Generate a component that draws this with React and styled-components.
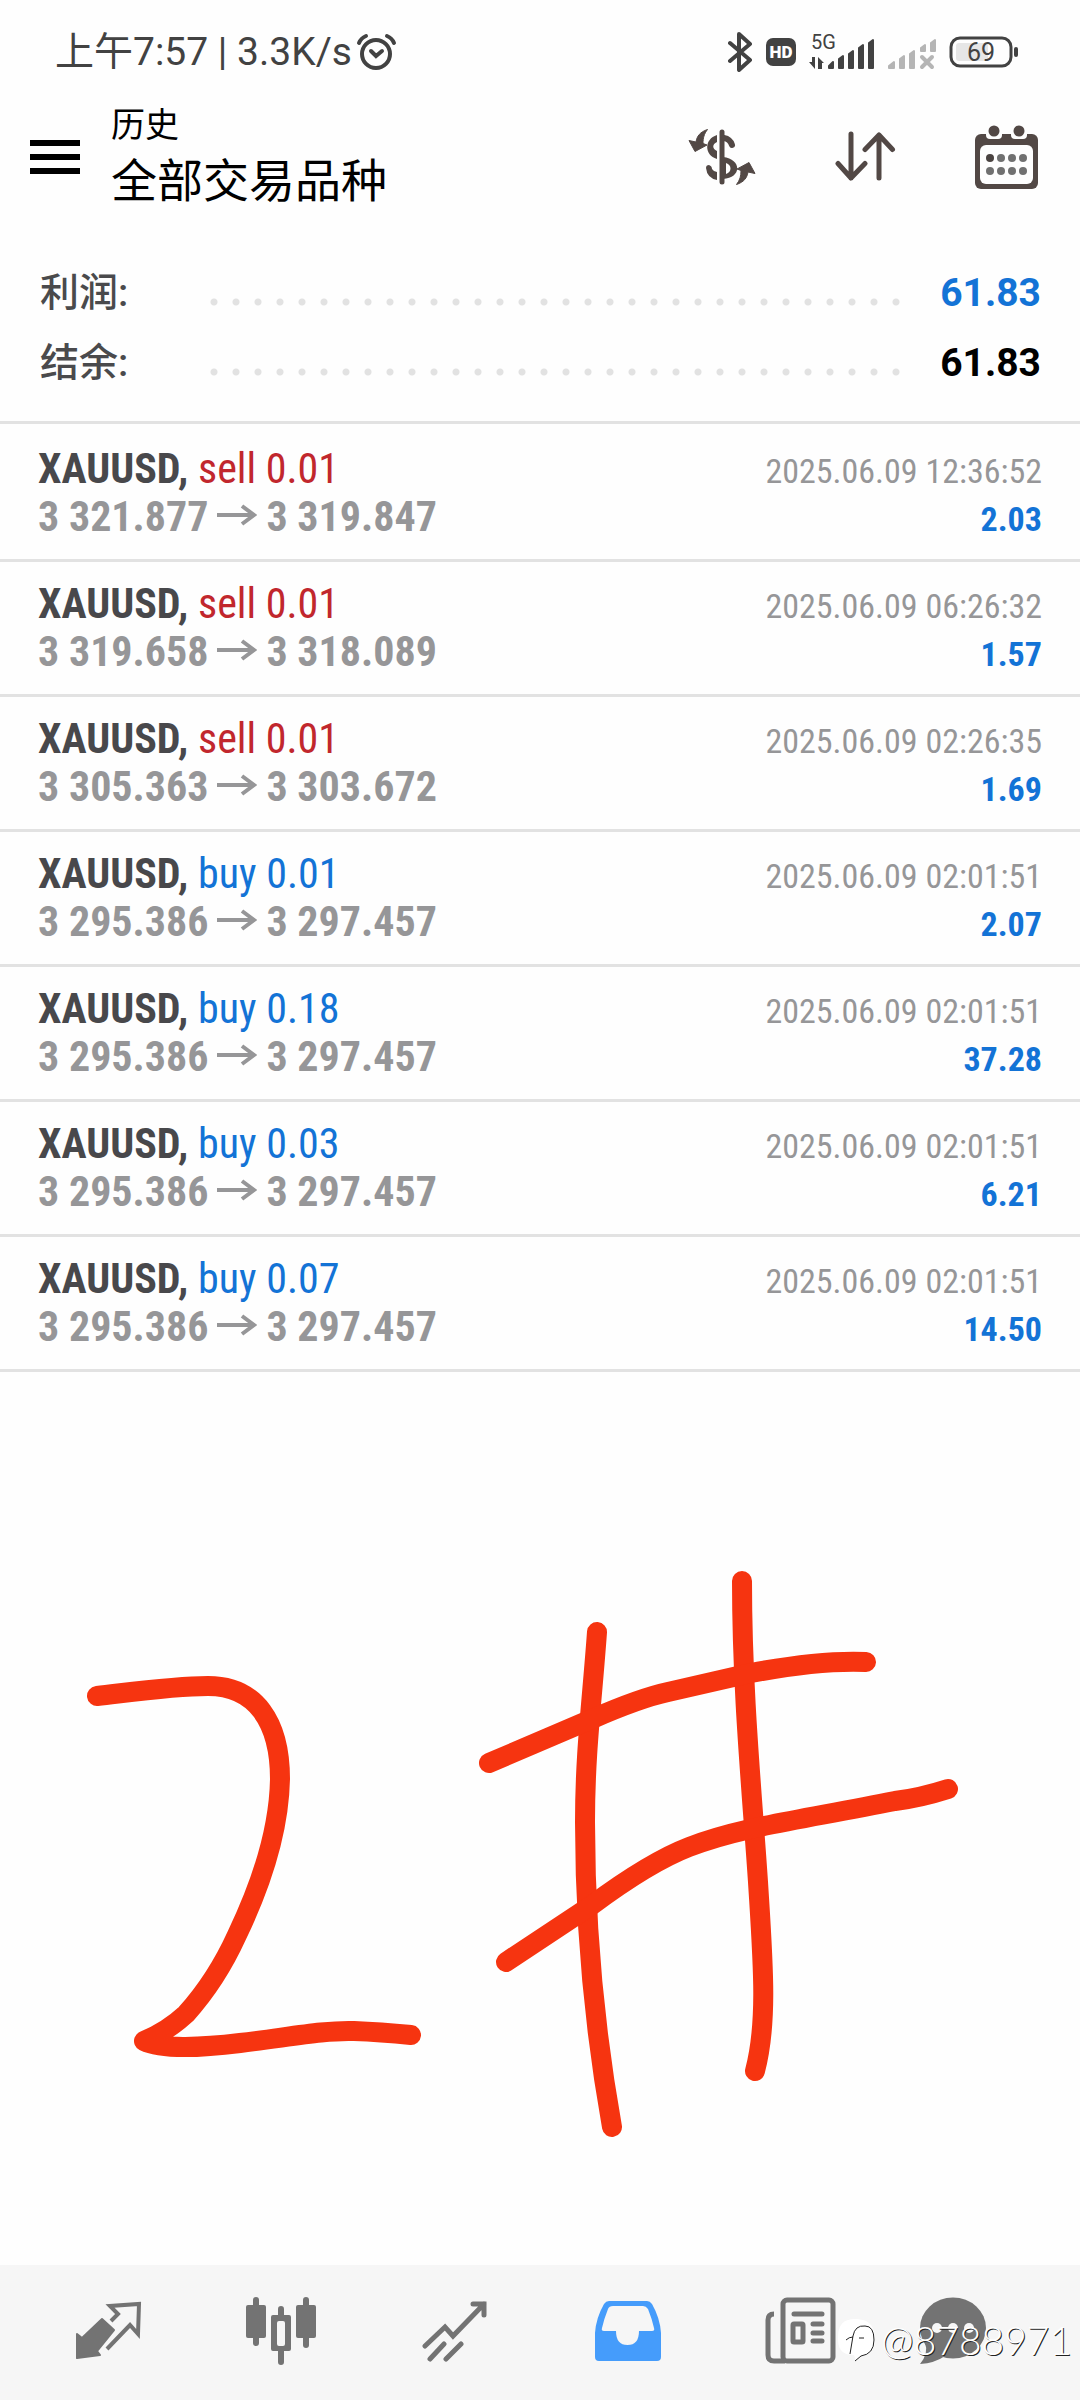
import React, { useState } from "react";
import styled, { createGlobalStyle } from "styled-components";

const GlobalStyle = createGlobalStyle`
  * {
    box-sizing: border-box;
  }
  body {
    margin: 0;
    background: #fefefe;
    font-family: Roboto, "Noto Sans CJK SC", sans-serif;
    color: #000;
  }
  svg {
    display: block;
    flex-shrink: 0;
  }
`;

const Screen = styled.div`
  min-height: 100vh;
  display: flex;
  flex-direction: column;
`;

const StatusBar = styled.div`
  height: 99px;
  padding: 5px 61px 0 55px;
  display: flex;
  justify-content: space-between;
  align-items: center;
  color: #424242;
`;

const StatusGroup = styled.div`
  display: flex;
  align-items: center;
  gap: ${(p) => p.$gap};
  font-size: 39px;
  line-height: 44px;
`;

const Header = styled.header`
  display: flex;
  align-items: center;
  gap: 31px;
  padding: 2px 41px 42px 30px;
`;

const IconButton = styled.button`
  border: none;
  background: none;
  padding: 0;
  color: #524845;
  cursor: pointer;
`;

const Titles = styled.div`
  flex: 1;
`;

const Subtitle = styled.div`
  font-size: 34px;
  line-height: 48px;
`;

const Title = styled.h1`
  margin: 0;
  font-size: 46px;
  font-weight: 400;
  line-height: 64px;
`;

const Actions = styled.div`
  display: flex;
  align-items: center;
  gap: 78px;
`;

const Summary = styled.section`
  padding: 3px 39px 23px 40px;
  border-bottom: 3px solid #e2e2e2;
`;

const SummaryRow = styled.div`
  display: flex;
  align-items: baseline;
  height: 70px;
  font-size: 39px;
  line-height: 70px;
`;

const SummaryLabel = styled.span`
  flex: 0 0 163px;
  font-weight: 500;
  color: #4a4a4c;
`;

const Dots = styled.span`
  flex: 1;
  height: 8px;
  margin-bottom: 7px;
  background: radial-gradient(circle, #e2e2e2 3px, transparent 4px) 0 0 / 22px 8px;
`;

const SummaryValue = styled.span`
  flex: 0 0 134px;
  text-align: right;
  font-weight: 700;
  color: ${(p) => p.$color};
`;

const DealList = styled.ul`
  list-style: none;
  margin: 0;
  padding: 3px 0 0;
  font-family: "Roboto Condensed", Roboto, sans-serif;
`;

const Deal = styled.li`
  padding: 18px 38px;
  border-bottom: 3px solid #e2e2e2;
`;

const Line = styled.div`
  display: flex;
  justify-content: space-between;
  align-items: baseline;
  height: 48px;
  font-size: 42px;
  line-height: 48px;
`;

const Symbol = styled.span`
  font-weight: 700;
  color: #48484b;
`;

const Side = styled.span`
  color: ${(p) => (p.$side === "sell" ? "#c1272d" : "#1373d6")};
`;

const Prices = styled.span`
  font-weight: 700;
  color: #969698;
  svg {
    display: inline-block;
    margin: 0 9px;
    vertical-align: 5px;
  }
`;

const Time = styled.time`
  font-size: 34px;
  color: #969698;
`;

const Profit = styled.span`
  font-size: 34px;
  font-weight: 700;
  color: #1373d6;
`;

const Sketch = styled.div`
  flex: 1;
  svg {
    width: 100%;
    height: auto;
  }
`;

const TabBar = styled.nav`
  position: relative;
  display: grid;
  grid-template-columns: repeat(5, 173fr) 132fr;
  height: 135px;
  padding: 0 61px 0 22px;
  background: #f6f6f6;
`;

const Tab = styled.button`
  border: none;
  background: none;
  padding: 0 0 3px;
  display: flex;
  align-items: center;
  justify-content: center;
  color: ${(p) => (p.$active ? "#459cfb" : "#737373")};
  cursor: pointer;
`;

const Watermark = styled.div`
  position: absolute;
  right: 8px;
  bottom: 36px;
  display: flex;
  align-items: center;
  gap: 5px;
  font-family: Lato, sans-serif;
  font-size: 39px;
  font-weight: 300;
  line-height: 48px;
  color: #fff;
  text-shadow: 1px 1px 0 #222;
  pointer-events: none;
`;

const AlarmIcon = () => (
  <svg width="41" height="38" fill="none" stroke="currentColor" strokeWidth="4" strokeLinecap="round">
    <circle cx="20" cy="21" r="14" />
    <path d="M3 10Q5 5 10 3M31 3Q36 5 38 10M15 18l5 5 6-5" />
  </svg>
);

const BluetoothIcon = () => (
  <svg width="25" height="40" fill="none" stroke="currentColor" strokeWidth="4" strokeLinecap="round" strokeLinejoin="round">
    <path d="M2 11L22 28L11 38V2L22 12L2 29" />
  </svg>
);

const HdIcon = () => (
  <svg width="30" height="28">
    <rect width="30" height="28" rx="7" fill="currentColor" />
    <text x="15" y="20" fill="#fff" fontSize="17" fontWeight="900" textAnchor="middle">HD</text>
  </svg>
);

const SignalIcon = () => (
  <svg width="66" height="50" viewBox="0 -6 66 50" fill="currentColor">
    <text x="2" y="16" fontSize="20">5G</text>
    <path d="M0 29h3v-5h3v12zM9 36V24l6 6h-2v6z" />
    <g stroke="currentColor" strokeWidth="2" strokeLinejoin="round">
      <path d="M20 35v-2l4-4v6zM30 35V26l4-3v12zM40 35V21l4-3v17zM50 35V15l4-3v23zM60 35V10l4-3v28z" />
    </g>
  </svg>
);

const NoSignalIcon = () => (
  <svg width="48" height="38" fill="#b5b5b5" stroke="#b5b5b5" strokeLinejoin="round" strokeLinecap="round">
    <path strokeWidth="2" d="M1 35v-2l5-4v6zM12 35V26l4-3v12zM22 35V21l4-3v17zM33 18V15l4-3v6zM43 18V10l4-3v11z" />
    <path strokeWidth="4" d="M34 24l10 10M44 24L34 34" />
  </svg>
);

const BatteryIcon = () => (
  <svg width="70" height="32">
    <rect x="7" y="7" width="32" height="18" rx="3" fill="#e6e6e6" />
    <rect x="2" y="2" width="60" height="28" rx="9" fill="none" stroke="currentColor" strokeWidth="3" />
    <rect x="65" y="11" width="4" height="10" rx="2" fill="currentColor" />
    <text x="32" y="25" fill="currentColor" fontSize="25" textAnchor="middle">69</text>
  </svg>
);

const MenuIcon = () => (
  <svg width="50" height="34" fill="#000">
    <rect width="50" height="6" y="0" />
    <rect width="50" height="6" y="14" />
    <rect width="50" height="6" y="28" />
  </svg>
);

const curvedArrow = "M19.5 1.5C12 4 9 8 8 14L1 12.5L7 23.5L19 17L15 15.5C15 10 16 6 19.5 1.5Z";

const CurrencyIcon = () => (
  <svg width="68" height="58" fill="currentColor">
    <g stroke="currentColor" strokeLinejoin="round">
      <path d={curvedArrow} />
      <path d={curvedArrow} transform="rotate(180 34 29)" />
    </g>
    <path d="M29 7C16 11 16 27 29 31V23C24 21 24 16 29 14Z" />
    <path fillRule="evenodd" d="M35 29C54 31 54 50 35 51ZM38 35V46C44 44 44 37 38 35Z" />
    <g fill="none" stroke="currentColor" strokeLinecap="round">
      <path strokeWidth="5" d="M34 4V54" />
      <path strokeWidth="6" d="M36 10Q42 11 44 17" />
    </g>
    <path d="M18 40Q18 37 21 37Q24 38 24 41Q26 44 29 44V52Q19 50 18 40Z" />
  </svg>
);

const SortIcon = () => (
  <svg width="62" height="54" fill="none" stroke="currentColor" strokeWidth="5" strokeLinecap="round" strokeLinejoin="round">
    <path d="M17 4V48M4 33.5L17 48L31 33.5M45 48V5M31 19.5L45 5L58.5 19.5" />
  </svg>
);

const CalendarIcon = () => (
  <svg width="65" height="65" fill="currentColor">
    <rect x="1" y="9" width="63" height="55" rx="6" />
    <rect x="6" y="20" width="53" height="39" rx="6" fill="#fefefe" />
    {[20, 45].map((x) => (
      <g key={x}>
        <path d={`M${x - 8} 6h16v4q0 4-4 4h-8q-4 0-4-4z`} fill="#fefefe" />
        <circle cx={x} cy="6" r="5.5" />
      </g>
    ))}
    {[16, 27, 38, 49].map((x, i) => (
      <g key={x} fill="#707070">
        <circle cx={x} cy="33" r="4" fill={i === 0 ? "#4a4341" : "#707070"} />
        <circle cx={x} cy="46" r="4" />
      </g>
    ))}
  </svg>
);

const ArrowIcon = () => (
  <svg width="40" height="22" fill="none" stroke="currentColor" strokeWidth="4" role="img" aria-label="to">
    <path d="M0 11H37M25 2L37 11L25 20" />
  </svg>
);

const QuotesIcon = () => (
  <svg width="70" height="60">
    <path d="M37 20L44 13L36 5L65 3L64 33L56 24L33 48" fill="none" stroke="currentColor" strokeWidth="4" />
    <path d="M28 18L40 29L23 50L26 54L3 57V33L8 37Z" fill="currentColor" stroke="currentColor" strokeWidth="2" strokeLinejoin="round" />
  </svg>
);

const ChartIcon = () => (
  <svg width="73" height="70" fill="currentColor">
    <rect x="1" y="9" width="20" height="33" rx="2" />
    <rect x="8" y="1" width="6" height="49" rx="3" />
    <path fillRule="evenodd" d="M28 19h16q2 0 2 2v32q0 2-2 2h-16q-2 0-2-2V21q0-2 2-2zM34 25q-2 0-2 2v21q0 2 2 2h4q2 0 2-2V27q0-2-2-2z" />
    <path d="M33 20v-7q0-3 3-3t3 3v7zM33 54v12q0 3 3 3t3-3V54z" />
    <rect x="51" y="9" width="20" height="33" rx="2" />
    <rect x="58" y="1" width="6" height="51" rx="3" />
  </svg>
);

const TradeIcon = () => (
  <svg width="67" height="62" fill="none" stroke="currentColor" strokeWidth="5" strokeLinecap="round">
    <path d="M4 46L24 27L32 36L63 4M52 4H63V15M9 59L23 44M25 59L40 44" />
  </svg>
);

const HistoryIcon = () => (
  <svg width="68" height="62" fill="currentColor" fillRule="evenodd">
    <path d="M15 1H53Q56 1 58 4Q66 18 67 33V57Q67 61 63 61H5Q1 61 1 57V33Q2 18 10 4Q12 1 15 1ZM19 6Q15 6 14 9Q10 19 8 28Q7 31 10 31H22Q22 45 33.5 45Q45 45 45 31H58Q61 31 60 28Q58 19 54 9Q52 6 49 6Z" />
  </svg>
);

const NewsIcon = () => (
  <svg width="72" height="68" fill="none" stroke="currentColor" strokeWidth="5" strokeLinecap="round">
    <rect x="18" y="3" width="50" height="61" rx="4" />
    <path d="M20 64H9Q3 64 3 58V23Q3 17 9 17" strokeLinecap="butt" />
    <path d="M29 17H57M48 27H57M48 36H57M48 44H57" />
    <rect x="28" y="27" width="10" height="18" rx="1" />
  </svg>
);

const ChatIcon = () => (
  <svg width="68" height="68" fill="currentColor">
    <ellipse cx="34" cy="31" rx="33" ry="30.5" />
    <path d="M6 46Q10 56 1 67Q16 66 26 59Z" />
    {[18, 34, 50].map((x) => (
      <circle key={x} cx={x} cy="31" r="5" fill="#f6f6f6" />
    ))}
  </svg>
);

const BadgeIcon = () => (
  <svg width="39" height="44">
    <path d="M18 1C34 1 38 10 38 22C38 32 32 38 24 38L19 43L17 37C4 37 1 30 1 20C1 7 6 1 18 1Z" fill="#fff" />
    <path d="M28 8Q37 8 37 22Q37 36 24 38L18 43M28 8Q18 7 16 18L13 36M9 22Q12 19 16 19M22 20h5" fill="none" stroke="#222" />
  </svg>
);

const deals = [
  { side: "sell", volume: "0.01", open: "3 321.877", close: "3 319.847", time: "2025.06.09 12:36:52", profit: "2.03" },
  { side: "sell", volume: "0.01", open: "3 319.658", close: "3 318.089", time: "2025.06.09 06:26:32", profit: "1.57" },
  { side: "sell", volume: "0.01", open: "3 305.363", close: "3 303.672", time: "2025.06.09 02:26:35", profit: "1.69" },
  { side: "buy", volume: "0.01", open: "3 295.386", close: "3 297.457", time: "2025.06.09 02:01:51", profit: "2.07" },
  { side: "buy", volume: "0.18", open: "3 295.386", close: "3 297.457", time: "2025.06.09 02:01:51", profit: "37.28" },
  { side: "buy", volume: "0.03", open: "3 295.386", close: "3 297.457", time: "2025.06.09 02:01:51", profit: "6.21" },
  { side: "buy", volume: "0.07", open: "3 295.386", close: "3 297.457", time: "2025.06.09 02:01:51", profit: "14.50" },
];

const tabs = [
  { name: "Quotes", Icon: QuotesIcon },
  { name: "Chart", Icon: ChartIcon },
  { name: "Trade", Icon: TradeIcon },
  { name: "History", Icon: HistoryIcon },
  { name: "News", Icon: NewsIcon },
  { name: "Messages", Icon: ChatIcon },
];

export default function App() {
  const [active, setActive] = useState("History");

  return (
    <Screen lang="zh-CN">
      <GlobalStyle />
      <StatusBar>
        <StatusGroup $gap="4px">
          <span>上午7:57 | 3.3K/s</span>
          <AlarmIcon />
        </StatusGroup>
        <StatusGroup $gap="13px">
          <BluetoothIcon />
          <HdIcon />
          <SignalIcon />
          <NoSignalIcon />
          <BatteryIcon />
        </StatusGroup>
      </StatusBar>

      <Header>
        <IconButton aria-label="Menu">
          <MenuIcon />
        </IconButton>
        <Titles>
          <Subtitle>历史</Subtitle>
          <Title>全部交易品种</Title>
        </Titles>
        <Actions>
          <IconButton aria-label="Currency">
            <CurrencyIcon />
          </IconButton>
          <IconButton aria-label="Sort">
            <SortIcon />
          </IconButton>
          <IconButton aria-label="Period">
            <CalendarIcon />
          </IconButton>
        </Actions>
      </Header>

      <Summary>
        <SummaryRow>
          <SummaryLabel>利润:</SummaryLabel>
          <Dots />
          <SummaryValue $color="#1373d6">61.83</SummaryValue>
        </SummaryRow>
        <SummaryRow>
          <SummaryLabel>结余:</SummaryLabel>
          <Dots />
          <SummaryValue $color="#000">61.83</SummaryValue>
        </SummaryRow>
      </Summary>

      <DealList>
        {deals.map((deal, i) => (
          <Deal key={i}>
            <Line>
              <span>
                <Symbol>XAUUSD,</Symbol>{" "}
                <Side $side={deal.side}>
                  {deal.side} {deal.volume}
                </Side>
              </span>
              <Time>{deal.time}</Time>
            </Line>
            <Line>
              <Prices>
                {deal.open}
                <ArrowIcon />
                {deal.close}
              </Prices>
              <Profit>{deal.profit}</Profit>
            </Line>
          </Deal>
        ))}
      </DealList>

      {/* hand-drawn "2#" */}
      <Sketch>
        <svg viewBox="0 0 1080 893" fill="none" stroke="#f63410" strokeWidth="20" strokeLinecap="round" strokeLinejoin="round">
          <path d="M97 324C140 319 175 314 208 314C256 314 280 350 280 407C279 460 260 515 237 563C222 596 204 622 186 642C172 655 158 663 144 669C160 677 200 676 240 671C290 665 325 658 354 659Q380 660 411 663" />
          <path d="M597 260C592 330 585 380 585 450C585 560 595 660 612 755" />
          <path d="M742 209C742 320 752 420 758 510C763 590 768 650 755 699" />
          <path d="M489 391L592 347Q640 326 668 320L751 301Q820 288 866 290" />
          <path d="M506 590L592 533Q650 490 689 475C740 455 800 448 895 429Q920 426 948 417" />
        </svg>
      </Sketch>

      <TabBar>
        {tabs.map(({ name, Icon }) => (
          <Tab key={name} aria-label={name} $active={name === active} onClick={() => setActive(name)}>
            <Icon />
          </Tab>
        ))}
        <Watermark>
          <BadgeIcon />
          <span>@8788971</span>
        </Watermark>
      </TabBar>
    </Screen>
  );
}
